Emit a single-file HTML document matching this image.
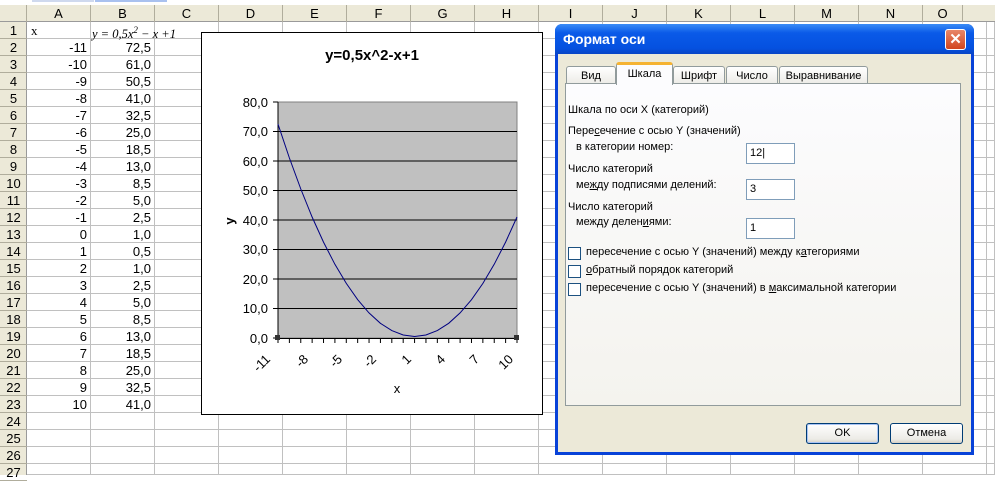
<!DOCTYPE html>
<html><head><meta charset="utf-8"><style>
*{margin:0;padding:0;box-sizing:border-box}
body{width:995px;height:475px;overflow:hidden;background:#fff;position:relative;font-family:"Liberation Sans",sans-serif;font-size:13px}
.a{position:absolute}
#grid{left:27px;top:22px;width:968px;height:453px;background-image:repeating-linear-gradient(90deg,#c0c0c0 0 1px,transparent 1px 64px),repeating-linear-gradient(180deg,#c0c0c0 0 1px,transparent 1px 17px);background-position:-1px -1px}
#colh{left:0;top:5px;width:995px;height:17px;background:#ece9d8;border-bottom:1px solid #9a9a9a}
#rowh{left:0;top:22px;width:27px;height:453px;background:#ece9d8;border-right:1px solid #9a9a9a}
.ch{position:absolute;top:5px;height:17px;width:64px;text-align:center;line-height:17px;border-right:1px solid #b0ad9c;font-size:13px}
.rh{position:absolute;left:0;width:27px;height:17px;text-align:center;line-height:17px;border-bottom:1px solid #b0ad9c;font-size:13px}
.c{position:absolute;height:17px;line-height:17px;text-align:right;width:60px;font-size:13px}
.dlg{left:555px;top:24px;width:419px;height:431px;background:#0842d8;border-radius:7px 7px 0 0}
.tb{left:0;top:0;width:419px;height:30px;border-radius:7px 7px 0 0;background:linear-gradient(#3a8cf6,#0a5ae8 30%,#0551e0 80%,#0845c6);color:#fff;font-weight:bold;font-size:14px;line-height:30px;padding-left:8px}
.body{left:3px;top:30px;width:413px;height:398px;background:#ece9d8}
.panel{left:7px;top:29px;width:396px;height:323px;background:#fcfcfe;border:1px solid #919b9c;background:linear-gradient(#fcfcfe,#f4f3ee)}
.tab{position:absolute;top:10px;height:20px;border:1px solid #919b9c;border-bottom:none;border-radius:3px 3px 0 0;background:linear-gradient(#fff,#ecebe6);text-align:center;line-height:18px;font-size:11px}
.lbl{position:absolute;font-size:11px;white-space:nowrap}
.inp{position:absolute;width:49px;height:21px;border:1px solid #7f9db9;background:#fff;font-size:11px;line-height:19px;padding-left:3px}
.cb{position:absolute;width:13px;height:13px;border:1px solid #1c5180;background:#fff}
.btn{position:absolute;top:369px;width:73px;height:21px;border:1px solid #003c74;border-radius:3px;background:linear-gradient(#fff,#ecebe6 80%,#d6d0c5);text-align:center;line-height:19px;font-size:11px}
</style></head><body>
<div class="a" style="left:0;top:0;width:995px;height:5px;background:#fff"></div>
<div class="a" style="left:32px;top:0;width:62px;height:2px;background:#cfd9ee"></div>
<div class="a" style="left:95px;top:0;width:72px;height:2px;background:#a9c1ef"></div>
<div id="grid" class="a"></div>
<div id="colh" class="a"></div>
<div class="ch" style="left:0;width:27px"></div>
<div class="ch" style="left:27px">A</div><div class="ch" style="left:91px">B</div><div class="ch" style="left:155px">C</div><div class="ch" style="left:219px">D</div><div class="ch" style="left:283px">E</div><div class="ch" style="left:347px">F</div><div class="ch" style="left:411px">G</div><div class="ch" style="left:475px">H</div><div class="ch" style="left:539px">I</div><div class="ch" style="left:603px">J</div><div class="ch" style="left:667px">K</div><div class="ch" style="left:731px">L</div><div class="ch" style="left:795px">M</div><div class="ch" style="left:859px">N</div><div class="ch" style="left:923px;width:40px">O</div>
<div id="rowh" class="a"></div>
<div id="rows"></div>
<div class="a" style="left:31px;top:22px;height:17px;line-height:17px;font-family:'Liberation Serif',serif;font-size:13px">x</div>
<div class="a" style="left:92px;top:22px;height:17px;line-height:17px;font-family:'Liberation Serif',serif;font-style:italic;font-size:12.5px;white-space:nowrap">y = 0,5x<sup style="font-size:9px">2</sup> − x +1</div>
<div id="cells"></div>

<!-- chart -->
<div class="a" style="left:201px;top:32px;width:342px;height:383px;background:#fff;border:1px solid #000"></div>
<div class="a" style="left:201px;top:47px;width:342px;text-align:center;font-weight:bold;font-size:15px">y=0,5x^2-x+1</div>
<svg class="a" style="left:0;top:0" width="995" height="475">
<rect x="278" y="102" width="239" height="236" fill="#c0c0c0" stroke="#808080"/>
<g stroke="#000" stroke-width="1">
<line x1="278" y1="131.5" x2="517" y2="131.5"/><line x1="278" y1="161" x2="517" y2="161"/><line x1="278" y1="190.5" x2="517" y2="190.5"/><line x1="278" y1="220" x2="517" y2="220"/><line x1="278" y1="249.5" x2="517" y2="249.5"/><line x1="278" y1="279" x2="517" y2="279"/><line x1="278" y1="308.5" x2="517" y2="308.5"/>
<line x1="278" y1="102" x2="278" y2="338"/><line x1="278" y1="338.5" x2="517" y2="338.5"/>
</g>
<g stroke="#000" id="ticks"></g>
<polyline fill="none" stroke="#000080" stroke-width="1" points="278,124.1 289.4,158 300.8,189 312.1,217 323.5,242.1 334.9,264.3 346.3,283.4 357.7,299.7 369,312.9 380.4,323.3 391.8,330.6 403.2,335 414.6,336.5 425.9,335 437.3,330.6 448.7,323.3 460.1,312.9 471.5,299.7 482.9,283.4 494.2,264.3 505.6,242.1 517,217"/>
<rect x="275" y="335" width="5" height="5" fill="#333"/><rect x="514" y="335" width="5" height="5" fill="#333"/>
<g font-family="Liberation Sans" font-size="13" text-anchor="end">
<text x="268" y="107">80,0</text><text x="268" y="136">70,0</text><text x="268" y="166">60,0</text><text x="268" y="195">50,0</text><text x="268" y="225">40,0</text><text x="268" y="254">30,0</text><text x="268" y="284">20,0</text><text x="268" y="313">10,0</text><text x="268" y="343">0,0</text>
<text transform="translate(271,360) rotate(-45)">-11</text>
<text transform="translate(309,360) rotate(-45)">-8</text>
<text transform="translate(343,360) rotate(-45)">-5</text>
<text transform="translate(377,360) rotate(-45)">-2</text>
<text transform="translate(412,360) rotate(-45)">1</text>
<text transform="translate(446,360) rotate(-45)">4</text>
<text transform="translate(480,360) rotate(-45)">7</text>
<text transform="translate(514,360) rotate(-45)">10</text>
</g>
<text x="397" y="393" font-family="Liberation Sans" font-size="13" text-anchor="middle">x</text>
<text transform="translate(234,221) rotate(-90)" font-family="Liberation Sans" font-size="13" font-weight="bold" text-anchor="middle">y</text>
</svg>

<!-- dialog -->
<div class="a dlg">
<div class="a tb">Формат оси</div>
<div class="a" style="left:390px;top:5px;width:21px;height:21px;border:1px solid #fff;border-radius:3px;background:linear-gradient(#e8876a,#d2451e);color:#fff;font-weight:bold;text-align:center;line-height:19px;font-size:15px">✕</div>
<div class="a body">
<div class="tab" style="left:8px;width:50px;top:12px;height:18px">Вид</div>
<div class="tab" style="left:58px;width:57px;top:8px;height:23px;background:#fcfcfe;border-top:3px solid #f5b332;z-index:2;line-height:18px">Шкала</div>
<div class="tab" style="left:115px;width:52px;top:12px;height:18px">Шрифт</div>
<div class="tab" style="left:168px;width:52px;top:12px;height:18px">Число</div>
<div class="tab" style="left:221px;width:89px;top:12px;height:18px">Выравнивание</div>
<div class="a panel">
<div class="lbl" style="left:2px;top:20px">Шкала по оси X (категорий)</div>
<div class="lbl" style="left:2px;top:41px">Пере<u>с</u>ечение с осью Y (значений)</div>
<div class="lbl" style="left:10px;top:57px">в категории номер:</div>
<div class="inp" style="left:180px;top:59px">12|</div>
<div class="lbl" style="left:2px;top:79px">Число категорий</div>
<div class="lbl" style="left:10px;top:95px">ме<u>ж</u>ду подписями делений:</div>
<div class="inp" style="left:180px;top:95px">3</div>
<div class="lbl" style="left:2px;top:117px">Число категорий</div>
<div class="lbl" style="left:10px;top:132px">между делен<u>и</u>ями:</div>
<div class="inp" style="left:180px;top:134px">1</div>
<div class="cb" style="left:2px;top:163px"></div><div class="lbl" style="left:20px;top:162px">пересечение с осью Y (значений) между к<u>а</u>тегориями</div>
<div class="cb" style="left:2px;top:181px"></div><div class="lbl" style="left:20px;top:180px"><u>о</u>братный порядок категорий</div>
<div class="cb" style="left:2px;top:199px"></div><div class="lbl" style="left:20px;top:198px">пересечение с осью Y (значений) в <u>м</u>аксимальной категории</div>
</div>
<div class="btn" style="left:248px;box-shadow:inset 0 0 0 1px #a9c4f5">OK</div>
<div class="btn" style="left:332px">Отмена</div>
</div>
</div>

<script>
var r='',c='',A=[-11,-10,-9,-8,-7,-6,-5,-4,-3,-2,-1,0,1,2,3,4,5,6,7,8,9,10];
for(var i=1;i<=27;i++){r+='<div class="rh" style="top:'+(22+(i-1)*17)+'px">'+i+'</div>';}
for(var k=0;k<A.length;k++){var t=22+(k+1)*17,x=A[k],y=(0.5*x*x-x+1).toFixed(1).replace('.',',');
c+='<div class="c" style="left:27px;top:'+t+'px">'+x+'</div><div class="c" style="left:91px;top:'+t+'px">'+y+'</div>';}
document.getElementById('rows').innerHTML=r;document.getElementById('cells').innerHTML=c;
var g='';for(var j=0;j<=21;j++){var xx=278+j*239/21;g+='<line x1="'+xx+'" y1="338" x2="'+xx+'" y2="343"/>';}
for(var j=0;j<=8;j++){var yy=102+j*29.5;g+='<line x1="273" y1="'+yy+'" x2="278" y2="'+yy+'"/>';}
document.getElementById('ticks').innerHTML=g;
</script>
</body></html>
